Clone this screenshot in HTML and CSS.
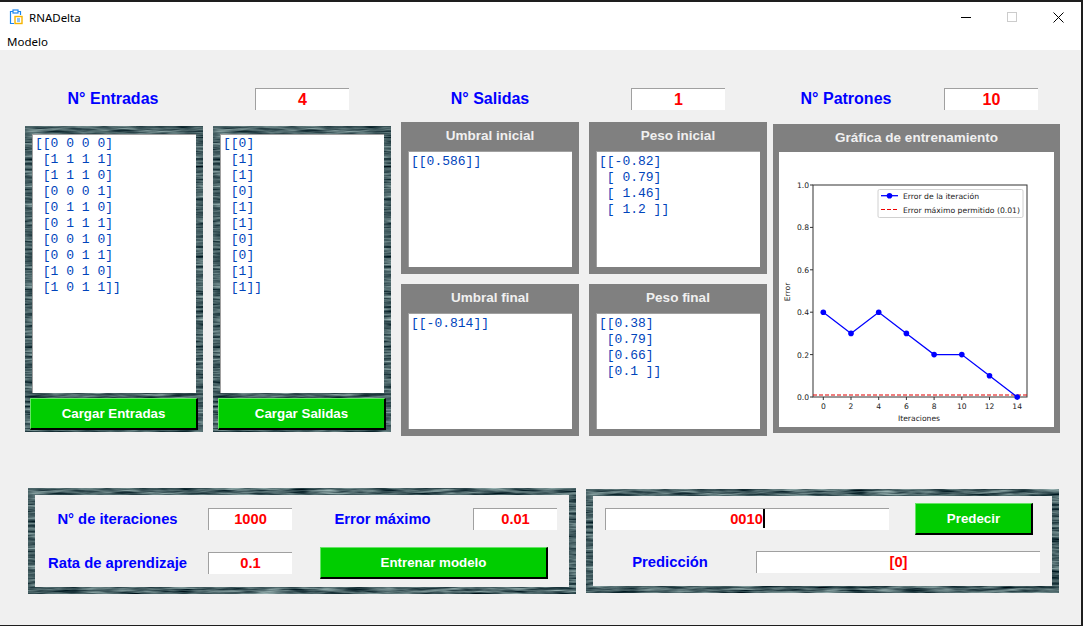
FILE: index.html
```html
<!DOCTYPE html>
<html lang="es">
<head>
<meta charset="UTF-8" />
<meta name="viewport" content="width=device-width, initial-scale=1" />
<title>RNADelta</title>
<link rel="stylesheet" href="styles.css">
</head>
<body>

<svg class="defs" width="0" height="0" aria-hidden="true">
  <filter id="water" x="0" y="0" width="100%" height="100%" color-interpolation-filters="sRGB">
    <feTurbulence type="fractalNoise" baseFrequency="0.035 0.4" numOctaves="3" seed="7" />
    <feColorMatrix type="matrix" values="0.9 0 0 0 -0.17  0.9 0 0 0 -0.07  0.85 0 0 0 -0.03  0 0 0 0 1" />
  </filter>
</svg>

<div class="window">
  <div class="titlebar">
    <svg class="app-icon" width="15" height="16" viewBox="0 0 15 16">
      <path d="M4 2.5H1.5v12H5M9 2.5h2.5V6" fill="none" stroke="#1a86f0" stroke-width="1.2" />
      <rect x="4" y="1" width="5" height="3" fill="#fff" stroke="#1a86f0" stroke-width="1.2" />
      <rect x="6" y="7.5" width="7" height="7" fill="#fff" stroke="#f5b400" stroke-width="1.4" />
      <path d="M8 10h3M8 12h3" stroke="#1a86f0" stroke-width="1" />
    </svg>
    <span class="app-name">RNADelta</span>
    <div class="controls">
      <div class="control"><svg width="10" height="10" viewBox="0 0 10 10"><path d="M0 5.5h10" stroke="#000" /></svg></div>
      <div class="control"><svg width="10" height="10" viewBox="0 0 10 10"><rect x=".5" y=".5" width="9" height="9" fill="none" stroke="#ccc" /></svg></div>
      <div class="control"><svg width="11" height="11" viewBox="0 0 11 11"><path d="M.5.5l10 10M10.5.5l-10 10" stroke="#000" /></svg></div>
    </div>
  </div>
  <div class="menubar">Modelo</div>

  <div class="client">
    <div class="counts">
      <div class="count count-in">
        <div class="label">N° Entradas</div>
        <div class="field field-big">4</div>
      </div>
      <div class="count count-out">
        <div class="label">N° Salidas</div>
        <div class="field field-big">1</div>
      </div>
      <div class="count count-pat">
        <div class="label">N° Patrones</div>
        <div class="field field-big">10</div>
      </div>
    </div>

    <div class="columns">
      <div class="frame data-frame">
        <pre class="text-box data-box">[[0 0 0 0]
 [1 1 1 1]
 [1 1 1 0]
 [0 0 0 1]
 [0 1 1 0]
 [0 1 1 1]
 [0 0 1 0]
 [0 0 1 1]
 [1 0 1 0]
 [1 0 1 1]]</pre>
        <button class="btn">Cargar Entradas</button>
      </div>
      <div class="frame data-frame">
        <pre class="text-box data-box">[[0]
 [1]
 [1]
 [0]
 [1]
 [1]
 [0]
 [0]
 [1]
 [1]]</pre>
        <button class="btn">Cargar Salidas</button>
      </div>

      <div class="cards">
        <div class="card">
          <div class="card-title">Umbral inicial</div>
          <pre class="text-box">[[0.586]]</pre>
        </div>
        <div class="card">
          <div class="card-title">Peso inicial</div>
          <pre class="text-box">[[-0.82]
 [ 0.79]
 [ 1.46]
 [ 1.2 ]]</pre>
        </div>
        <div class="card">
          <div class="card-title">Umbral final</div>
          <pre class="text-box">[[-0.814]]</pre>
        </div>
        <div class="card">
          <div class="card-title">Peso final</div>
          <pre class="text-box">[[0.38]
 [0.79]
 [0.66]
 [0.1 ]]</pre>
        </div>
      </div>

      <div class="card chart-card">
        <div class="card-title">Gráfica de entrenamiento</div>
        <svg class="chart" width="275" height="275" viewBox="0 0 275 275">
          <rect x="34" y="33" width="214" height="212" fill="#fff" stroke="#333" />
          <g stroke="#333">
            <path d="M31 33h3M31 75.4h3M31 117.8h3M31 160.2h3M31 202.6h3M31 245h3" />
            <path d="M44.3 245v3M72 245v3M99.7 245v3M127.4 245v3M155.1 245v3M182.8 245v3M210.5 245v3M238.2 245v3" />
          </g>
          <g class="tick tick-y">
            <text x="30" y="36">1.0</text>
            <text x="30" y="78">0.8</text>
            <text x="30" y="121">0.6</text>
            <text x="30" y="163">0.4</text>
            <text x="30" y="206">0.2</text>
            <text x="30" y="248">0.0</text>
          </g>
          <g class="tick tick-x">
            <text x="44.3" y="257">0</text>
            <text x="72" y="257">2</text>
            <text x="99.7" y="257">4</text>
            <text x="127.4" y="257">6</text>
            <text x="155.1" y="257">8</text>
            <text x="182.8" y="257">10</text>
            <text x="210.5" y="257">12</text>
            <text x="238.2" y="257">14</text>
          </g>
          <text class="tick tick-x" x="140" y="269">Iteraciones</text>
          <text class="tick tick-x" transform="translate(11 140) rotate(-90)">Error</text>
          <path d="M34 243h214" stroke="#e00000" stroke-width="1.2" stroke-dasharray="4 2" />
          <polyline points="44.3,160.2 72,181.4 99.7,160.2 127.4,181.4 155.1,202.6 182.8,202.6 210.5,223.8 238.2,245" fill="none" stroke="#0000ff" stroke-width="1.3" />
          <g fill="#0000ff">
            <circle cx="44.3" cy="160.2" r="2.8" />
            <circle cx="72" cy="181.4" r="2.8" />
            <circle cx="99.7" cy="160.2" r="2.8" />
            <circle cx="127.4" cy="181.4" r="2.8" />
            <circle cx="155.1" cy="202.6" r="2.8" />
            <circle cx="182.8" cy="202.6" r="2.8" />
            <circle cx="210.5" cy="223.8" r="2.8" />
            <circle cx="238.2" cy="245" r="2.8" />
          </g>
          <rect x="99" y="37.5" width="145" height="28" rx="1.5" fill="#fff" stroke="#d0d0d0" />
          <path d="M102 43.7h17" stroke="#0000ff" stroke-width="1.3" />
          <circle cx="110.5" cy="43.7" r="2.8" fill="#0000ff" />
          <path d="M102 57.5h17" stroke="#f00000" stroke-width="1.2" stroke-dasharray="4 2" />
          <text class="tick" x="124" y="46.5" textLength="76" lengthAdjust="spacingAndGlyphs">Error de la iteración</text>
          <text class="tick" x="124" y="60.5" textLength="117" lengthAdjust="spacingAndGlyphs">Error máximo permitido (0.01)</text>
        </svg>
      </div>
    </div>

    <div class="bottom">
      <div class="frame train-frame">
        <div class="inner train-inner">
          <div class="param-row">
            <div class="label-sm param-label">N° de iteraciones</div>
            <div class="field field-sm">1000</div>
            <div class="label-sm error-label">Error máximo</div>
            <div class="field field-sm">0.01</div>
          </div>
          <div class="param-row param-row-btn">
            <div class="label-sm param-label">Rata de aprendizaje</div>
            <div class="field field-sm">0.1</div>
            <button class="btn btn-train">Entrenar modelo</button>
          </div>
        </div>
      </div>

      <div class="frame predict-frame">
        <div class="inner predict-inner">
          <div class="predict-row">
            <div class="field field-wide">0010<span class="caret"></span></div>
            <button class="btn btn-predict">Predecir</button>
          </div>
          <div class="predict-row result-row">
            <div class="label-sm result-label">Predicción</div>
            <div class="field field-wide">[0]</div>
          </div>
        </div>
      </div>
    </div>
  </div>
</div>

</body>
</html>
```

FILE: styles.css
```css
/* ventana */
html, body {
  margin: 0;
  padding: 0;
}
body {
  width: 1083px;
  height: 626px;
  overflow: hidden;
  font-family: "Liberation Sans", Arial, sans-serif;
}
.defs {
  position: absolute;
}
.window {
  width: 1083px;
  height: 626px;
  box-sizing: border-box;
  border-top: 2px solid #1e1e1e;
  border-right: 2px solid #1e1e1e;
  border-bottom: 1px solid #1e1e1e;
  background: #f0f0f0;
  display: flex;
  flex-direction: column;
}
.titlebar {
  height: 30px;
  background: #fff;
  display: flex;
  align-items: center;
  padding-left: 9px;
}
.app-name {
  margin-left: 5px;
  font: 11.5px "Noto Sans", sans-serif;
  color: #000;
}
.controls {
  margin-left: auto;
  display: flex;
}
.control {
  width: 46px;
  height: 30px;
  display: flex;
  align-items: center;
  justify-content: center;
}
.menubar {
  height: 18px;
  background: #fff;
  padding-left: 7px;
  font: 11.5px/20px "Noto Sans", sans-serif;
  color: #000;
}

/* area de trabajo */
.client {
  flex: 1;
  padding: 38px 0 0 25px;
}
.counts {
  display: flex;
  height: 22px;
}
.count {
  display: flex;
  align-items: center;
}
.label {
  font-size: 16px;
  font-weight: bold;
  color: #0000ff;
  text-align: center;
}
.count-in {
  width: 376px;
}
.count-in .label {
  width: 176px;
  margin-right: 54px;
}
.count-out {
  width: 372px;
}
.count-out .label {
  width: 178px;
  margin-right: 52px;
}
.count-pat .label {
  width: 146px;
  margin-right: 25px;
}
.field {
  box-sizing: border-box;
  height: 22px;
  line-height: 21px;
  background: #fff;
  border-top: 1px solid #a0a0a0;
  border-left: 1px solid #a0a0a0;
  color: #ff0000;
  font-weight: bold;
  font-size: 14.67px;
  text-align: center;
}
.field-big {
  width: 94px;
  font-size: 16px;
}
.field-sm {
  width: 84px;
}
.field-wide {
  width: 284px;
}
.caret {
  display: inline-block;
  width: 2px;
  height: 19px;
  background: #000;
  vertical-align: -4px;
}

.columns {
  display: flex;
  align-items: flex-start;
  margin-top: 12px;
}
.frame {
  position: relative;
  isolation: isolate;
  box-sizing: border-box;
}
.frame::before {
  content: "";
  position: absolute;
  inset: 0;
  z-index: -1;
  background: #3f5c62;
  filter: url(#water);
}
.data-frame {
  width: 178px;
  height: 306px;
  margin: 4px 10px 0 0;
  padding: 8px 5px 0;
}
.text-box {
  box-sizing: border-box;
  margin: 0;
  background: #fff;
  border-top: 1px solid #a0a0a0;
  border-left: 1px solid #a0a0a0;
  padding: 2px 0 0 2px;
  font: 13px/16px "Liberation Mono", "Courier New", monospace;
  color: #0044bb;
  text-align: left;
  overflow: hidden;
}
.data-box {
  width: 164px;
  height: 259px;
  margin-left: 2px;
  padding-top: 1px;
}
.btn {
  display: block;
  box-sizing: border-box;
  width: 168px;
  height: 32px;
  margin-top: 5px;
  padding: 0;
  background: #00cd00;
  border: 1px solid;
  border-color: #66e566 #000 #000 #66e566;
  border-width: 1px 2px 2px 1px;
  border-radius: 0;
  color: #fff;
  font-family: "Liberation Sans", Arial, sans-serif;
  font-size: 13.33px;
  font-weight: bold;
  text-align: center;
}

/* paneles grises */
.cards {
  display: grid;
  grid-template-columns: 178px 178px;
  gap: 10px;
}
.card {
  box-sizing: border-box;
  width: 178px;
  height: 152px;
  background: #808080;
  padding: 0 7px;
}
.card-title {
  height: 29px;
  line-height: 27px;
  text-align: center;
  color: #f0f0f0;
  font-size: 13.5px;
  font-weight: bold;
}
.card .text-box {
  height: 116px;
}
.chart-card {
  width: 287px;
  height: 309px;
  margin: 2px 0 0 6px;
  padding: 0 6px;
}
.chart-card .card-title {
  height: 28px;
  line-height: 27px;
}
.chart {
  display: block;
  background: #fff;
}
.tick {
  font-family: "DejaVu Sans", sans-serif;
  font-size: 7.6px;
  fill: #222;
}
.tick-y {
  text-anchor: end;
}
.tick-x {
  text-anchor: middle;
}

/* parte inferior */
.bottom {
  display: flex;
  align-items: center;
  margin: 52px 0 0 3px;
}
.train-frame {
  width: 548px;
  height: 106px;
  padding: 7px;
}
.predict-frame {
  width: 473px;
  height: 104px;
  margin-left: 10px;
  padding: 7px;
}
.inner {
  box-sizing: border-box;
  height: 100%;
  background: #f0f0f0;
}
.label-sm {
  font-size: 14.8px;
  font-weight: bold;
  color: #0000ff;
  text-align: center;
}
.train-inner {
  padding-top: 13px;
}
.param-row {
  display: flex;
  align-items: center;
}
.param-row-btn {
  margin-top: 17px;
}
.param-label {
  width: 165px;
  margin-right: 8px;
}
.error-label {
  width: 181px;
}
.btn-train {
  width: 228px;
  margin: 0 0 0 28px;
}
.predict-inner {
  padding: 7px 0 0 12px;
}
.predict-row {
  display: flex;
  align-items: center;
}
.btn-predict {
  width: 118px;
  margin: 0 0 0 26px;
}
.result-row {
  margin-top: 16px;
}
.result-label {
  width: 130px;
  margin-right: 21px;
}
```
